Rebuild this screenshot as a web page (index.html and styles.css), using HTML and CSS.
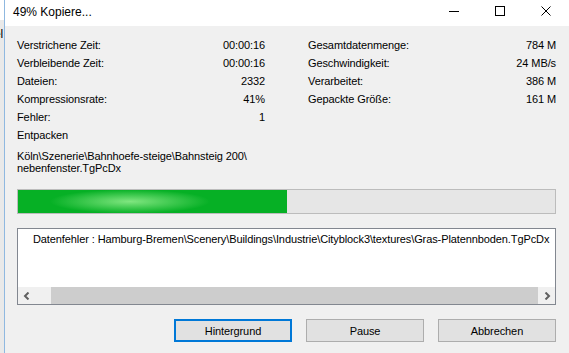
FILE: index.html
```html
<!DOCTYPE html>
<html lang="de">

<head>
    <meta charset="UTF-8">
    <meta name="viewport" content="width=device-width, initial-scale=1.0">
    <title>49% Kopiere...</title>
    <link rel="stylesheet" href="styles.css">
</head>

<body>
    <div class="desk">
        <div class="behind"><span class="behind-text">el</span></div>

        <div class="window">
            <div class="titlebar">
                <span class="title">49% Kopiere...</span>
                <div class="controls">
                    <span class="ctl"><span class="min"></span></span>
                    <span class="ctl"><span class="max"></span></span>
                    <span class="ctl">
                        <svg width="10" height="10" viewBox="0 0 10 10">
                            <path d="M0.5 0.5 L9.5 9.5 M9.5 0.5 L0.5 9.5" stroke="#000" stroke-width="1" fill="none"/>
                        </svg>
                    </span>
                </div>
            </div>

            <div class="content">
                <div class="info">
                    <div class="col">
                        <div class="row"><span>Verstrichene Zeit:</span><span>00:00:16</span></div>
                        <div class="row"><span>Verbleibende Zeit:</span><span>00:00:16</span></div>
                        <div class="row"><span>Dateien:</span><span>2332</span></div>
                        <div class="row"><span>Kompressionsrate:</span><span>41%</span></div>
                        <div class="row"><span>Fehler:</span><span>1</span></div>
                        <div class="row"><span>Entpacken</span></div>
                    </div>
                    <div class="col">
                        <div class="row"><span>Gesamtdatenmenge:</span><span>784 M</span></div>
                        <div class="row"><span>Geschwindigkeit:</span><span>24 MB/s</span></div>
                        <div class="row"><span>Verarbeitet:</span><span>386 M</span></div>
                        <div class="row"><span>Gepackte Größe:</span><span>161 M</span></div>
                    </div>
                </div>

                <div class="path">Köln\Szenerie\Bahnhoefe-steige\Bahnsteig 200\<br>nebenfenster.TgPcDx</div>

                <div class="progress">
                    <div class="fill" style="width: 50%"></div>
                </div>

                <div class="listbox">
                    <div class="list-item">Datenfehler : Hamburg-Bremen\Scenery\Buildings\Industrie\Cityblock3\textures\Gras-Platennboden.TgPcDx</div>
                    <div class="hscroll">
                        <span class="arrow">
                            <svg width="8" height="8" viewBox="0 0 8 8">
                                <path d="M5.5 0.5 L2 4 L5.5 7.5" stroke="#606060" stroke-width="2" fill="none"/>
                            </svg>
                        </span>
                        <span class="track"><span class="thumb"></span></span>
                        <span class="arrow">
                            <svg width="8" height="8" viewBox="0 0 8 8">
                                <path d="M2.5 0.5 L6 4 L2.5 7.5" stroke="#606060" stroke-width="2" fill="none"/>
                            </svg>
                        </span>
                    </div>
                </div>

                <div class="buttons">
                    <button class="btn default">Hintergrund</button>
                    <button class="btn">Pause</button>
                    <button class="btn">Abbrechen</button>
                </div>
            </div>
        </div>
    </div>
</body>

</html>
```

FILE: styles.css
```css
body {
    margin: 0;
    width: 569px;
    height: 353px;
    overflow: hidden;
    font-family: "Liberation Sans", Arial, sans-serif;
    font-size: 11px;
    letter-spacing: -0.1px;
    color: #000;
    background: #f0f0f0;
}

.desk {
    display: flex;
    height: 353px;
}

.behind {
    flex: 0 0 4px;
    overflow: hidden;
    background: linear-gradient(#fff 0, #fff 20px, #e9e9e9 20px);
    border-right: 1px solid #8fb8e0;
}

.behind-text {
    display: block;
    margin-top: 27px;
    margin-left: -6px;
    font-size: 12px;
}

.window {
    flex: 1;
    min-width: 0;
    display: flex;
    flex-direction: column;
}

.titlebar {
    height: 26px;
    background: #fff;
    display: flex;
    align-items: flex-start;
    justify-content: space-between;
}

.title {
    font-size: 12px;
    letter-spacing: 0;
    padding-left: 8px;
    line-height: 24px;
}

.controls {
    display: flex;
}

.ctl {
    width: 46px;
    height: 22px;
    display: flex;
    align-items: center;
    justify-content: center;
}

.min {
    width: 10px;
    height: 1px;
    background: #000;
}

.max {
    width: 8px;
    height: 8px;
    border: 1px solid #000;
}

.content {
    flex: 1;
    min-width: 0;
    padding: 10px 13px 0 12px;
}

.info {
    display: grid;
    grid-template-columns: 248px 248px;
    column-gap: 43px;
}

.row {
    display: flex;
    justify-content: space-between;
    height: 18px;
    line-height: 18px;
}

.path {
    margin-top: 6px;
    line-height: 12px;
}

.progress {
    margin-top: 15px;
    height: 23px;
    border: 1px solid #bcbcbc;
    background: #e6e6e6;
}

.fill {
    height: 100%;
    background:
        radial-gradient(ellipse 80px 12px at 112px 50%, #80e680 0, rgba(6, 176, 37, 0) 100%),
        #06b025;
}

.listbox {
    margin-top: 14px;
    height: 75px;
    overflow: hidden;
    border: 1px solid #828790;
    background: #fff;
    display: flex;
    flex-direction: column;
    justify-content: space-between;
}

.list-item {
    padding: 4px 0 0 15px;
    line-height: 13px;
    white-space: nowrap;
}

.hscroll {
    display: flex;
    height: 17px;
    background: #f0f0f0;
}

.arrow {
    width: 17px;
    display: flex;
    align-items: center;
    justify-content: center;
}

.track {
    flex: 1;
    display: flex;
    align-items: stretch;
    padding-left: 16px;
}

.thumb {
    flex: 1;
    background: #cdcdcd;
}

.buttons {
    margin-top: 14px;
    display: flex;
    justify-content: flex-end;
    gap: 14px;
}

.btn {
    width: 118px;
    height: 23px;
    box-sizing: border-box;
    padding: 0;
    font-family: "Liberation Sans", Arial, sans-serif;
    font-size: 11px;
    letter-spacing: -0.1px;
    color: #000;
    background: #e1e1e1;
    border: 1px solid #adadad;
}

.default {
    border: 2px solid #0078d7;
}
```
